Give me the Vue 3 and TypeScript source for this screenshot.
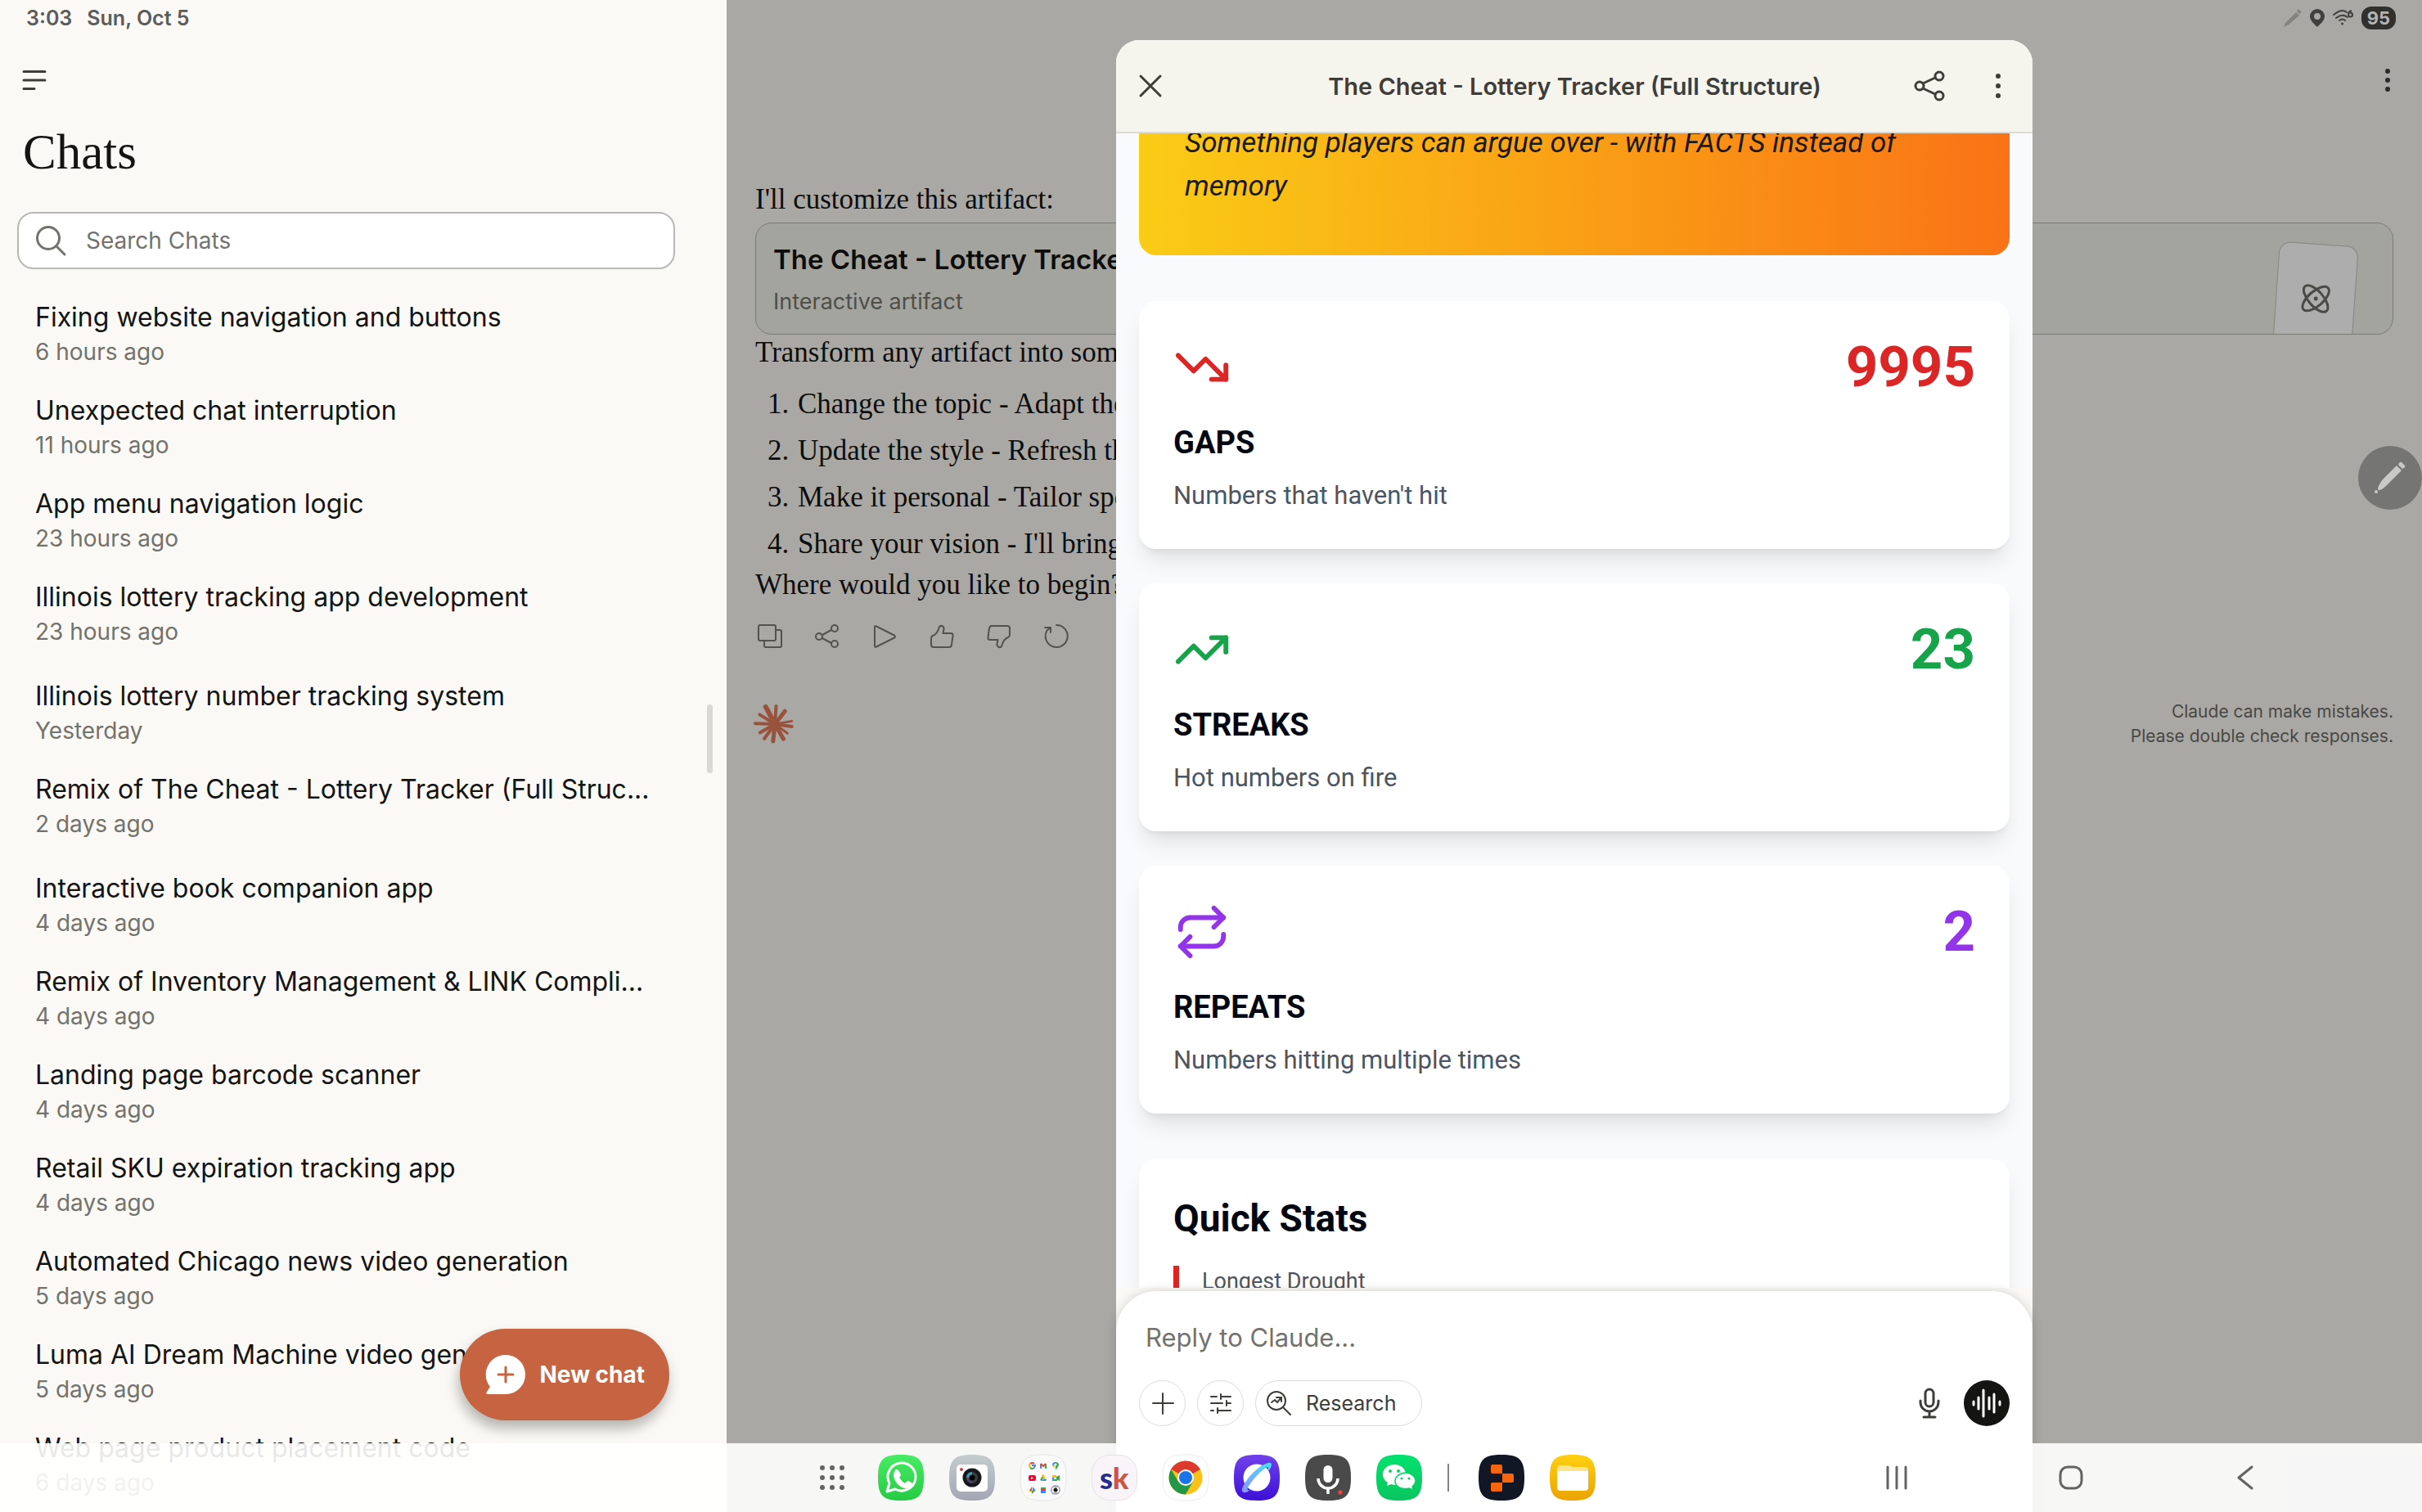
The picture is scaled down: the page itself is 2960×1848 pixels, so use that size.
<script setup lang="ts">
interface Chat {
  title: string
  when: string
}

interface Metric {
  label: string
  text: string
  value: string
  tone: string
  paths: string[]
}

interface Action {
  label: string
  paths: string[]
}

const groups: Chat[][] = [
  [
    { title: 'Fixing website navigation and buttons', when: '6 hours ago' },
    { title: 'Unexpected chat interruption', when: '11 hours ago' },
    { title: 'App menu navigation logic', when: '23 hours ago' },
    { title: 'Illinois lottery tracking app development', when: '23 hours ago' },
  ],
  [
    { title: 'Illinois lottery number tracking system', when: 'Yesterday' },
    { title: 'Remix of The Cheat - Lottery Tracker (Full Struc...', when: '2 days ago' },
  ],
  [
    { title: 'Interactive book companion app', when: '4 days ago' },
    { title: 'Remix of Inventory Management & LINK Compli...', when: '4 days ago' },
    { title: 'Landing page barcode scanner', when: '4 days ago' },
    { title: 'Retail SKU expiration tracking app', when: '4 days ago' },
    { title: 'Automated Chicago news video generation', when: '5 days ago' },
    { title: 'Luma AI Dream Machine video generation', when: '5 days ago' },
    { title: 'Web page product placement code', when: '6 days ago' },
  ],
]

const ideas: string[] = [
  'Change the topic - Adapt the text',
  'Update the style - Refresh the look',
  'Make it personal - Tailor specifics',
  "Share your vision - I'll bring it",
]

const actions: Action[] = [
  { label: 'Copy', paths: ['M4 1h16q2 0 2 2v15q0 2-2 2H3q-2 0-2-2V3q0-2 2-2z', 'M22 7h5q2 0 2 2v17q0 2-2 2H10q-2 0-2-2v-6'] },
  {
    label: 'Share',
    paths: [
      'M24 1a4 4 0 1 0 0 8a4 4 0 1 0 0-8z',
      'M24 20a4 4 0 1 0 0 8a4 4 0 1 0 0-8z',
      'M5 11a4 4 0 1 0 0 8a4 4 0 1 0 0-8z',
      'M9 13l11-6M9 17l11 6',
    ],
  },
  { label: 'Read aloud', paths: ['M3 3.500v23q0 2 2 1l22-11q2-1.500 0-3L5 2.500q-2-1 -2 1z'] },
  { label: 'Good response', paths: ['M2 17q0-2 2-3q5-2 7-8l1-3q1-1.500 3-1q3 1 2.500 4l-1 5H26q3 0 2.500 3l-1.500 11q-.5 3-3 3H5q-3 0-3-3z'] },
  { label: 'Bad response', paths: ['M28 13q0 2-2 3q-5 2-7 8l-1 3q-1 1.500-3 1q-3-1-2.500-4l1-5H4q-3 0-2.500-3L3 5q.5-3 3-3H25q3 0 3 3z'] },
  { label: 'Retry', paths: ['M1 4h7v6', 'M8 4L4 7A13.500 13.500 0 1 0 15 1'] },
]

const metrics: Metric[] = [
  {
    label: 'GAPS',
    text: "Numbers that haven't hit",
    value: '9995',
    tone: 'red',
    paths: ['M22 17l-8.500-8.500-5 5L2 7', 'M16 17h6v-6'],
  },
  {
    label: 'STREAKS',
    text: 'Hot numbers on fire',
    value: '23',
    tone: 'green',
    paths: ['M22 7l-8.500 8.500-5-5L2 17', 'M16 7h6v6'],
  },
  {
    label: 'REPEATS',
    text: 'Numbers hitting multiple times',
    value: '2',
    tone: 'purple',
    paths: ['M17 2l4 4-4 4', 'M3 11v-1a4 4 0 0 1 4-4h14', 'M7 22l-4-4 4-4', 'M21 13v1a4 4 0 0 1-4 4H3'],
  },
]

const rays: { angle: number; length: number; width: number }[] = [
  { angle: 4, length: 23, width: 4 },
  { angle: 38, length: 21, width: 5 },
  { angle: 62, length: 0, width: 0 },
  { angle: 80, length: 22, width: 3 },
  { angle: 98, length: 22, width: 4 },
  { angle: 126, length: 20, width: 3 },
  { angle: 150, length: 22, width: 5 },
  { angle: 186, length: 22, width: 5 },
  { angle: 216, length: 23, width: 4 },
  { angle: 240, length: 22, width: 4 },
  { angle: 272, length: 25, width: 4 },
  { angle: 302, length: 23, width: 4 },
  { angle: 332, length: 25, width: 6 },
].filter((r) => r.length > 0)

const dots: number[][] = [0, 1, 2].flatMap((r) => [0, 1, 2].map((c) => [19 + c * 12, 16 + r * 12]))
const squircle = 'M28 0C50 0 56 6 56 28S50 56 28 56 0 50 0 28 6 0 28 0Z'
</script>

<template>
  <div class="app">
    <aside class="sidebar">
      <div class="clock"><span>3:03</span><span>Sun, Oct 5</span></div>
      <button class="menu" type="button" aria-label="Menu">
        <svg width="28" height="28" viewBox="0 0 28 28"><path d="M1 3.500h26M1 14h26M1 24.500h13" /></svg>
      </button>
      <h1>Chats</h1>
      <label class="search">
        <svg width="38" height="38" viewBox="0 0 38 38"><circle cx="16" cy="16" r="13.500" /><path d="M26 26l10 10" /></svg>
        <input type="text" placeholder="Search Chats" aria-label="Search Chats" />
      </label>
      <nav class="history">
        <ul v-for="(group, g) in groups" :key="g">
          <li v-for="chat in group" :key="chat.title">
            <a href="#"><span class="title">{{ chat.title }}</span><span class="when">{{ chat.when }}</span></a>
          </li>
        </ul>
      </nav>
      <span class="thumb"></span>
      <button class="new-chat" type="button">
        <svg width="48" height="48" viewBox="0 0 48 48">
          <path d="M24 0a24 24 0 1 1 0 48H3q-4 0-2-3l4-6A24 24 0 0 1 24 0z" fill="#fff" />
          <path d="M24 15v18M15 24h18" stroke="#c66441" stroke-width="3" stroke-linecap="round" />
        </svg>
        New chat
      </button>
    </aside>

    <main class="main">
      <div class="system">
        <svg width="22" height="22" viewBox="0 0 22 22"><path d="M0 22l2-5L15 4l4 4L6 19zM16 3l2-3 4 4-3 2z" fill="#84837f" /></svg>
        <svg width="18" height="22" viewBox="0 0 18 22"><path d="M9 0a9 9 0 0 1 9 9c0 5-5 9-9 13C5 18 0 14 0 9a9 9 0 0 1 9-9zm0 5a4 4 0 1 0 0 8 4 4 0 0 0 0-8z" fill="#3f3f3d" /></svg>
        <svg width="25" height="22" viewBox="0 0 25 22">
          <path d="M1 7q10-8 16-3M4 11q7-6 14-1M8 14q4-3 7 0" fill="none" stroke="#3f3f3d" stroke-width="2" stroke-linecap="round" />
          <circle cx="11.500" cy="18" r="1.500" fill="#3f3f3d" />
          <path d="M23 2q-4 1-4 5a2.500 2.500 0 1 0 2.500-2.500q-2 0-2.500 2" fill="none" stroke="#3f3f3d" stroke-width="2" />
        </svg>
        <span class="battery">95</span>
      </div>
      <button class="kebab" type="button" aria-label="More options">
        <svg width="30" height="30" viewBox="0 0 30 30"><circle cx="15" cy="4" r="3" /><circle cx="15" cy="15" r="3" /><circle cx="15" cy="26" r="3" /></svg>
      </button>

      <article class="reply">
        <p>I'll customize this artifact:</p>
        <a class="artifact" href="#">
          <span class="artifact-name">The Cheat - Lottery Tracker (Full Structure)</span>
          <span class="artifact-kind">Interactive artifact</span>
          <span class="sheet">
            <svg width="36" height="36" viewBox="0 0 36 36">
              <ellipse cx="18" cy="18" rx="20" ry="9" transform="rotate(45 18 18)" />
              <ellipse cx="18" cy="18" rx="20" ry="9" transform="rotate(-45 18 18)" />
              <circle class="core" cx="18" cy="18" r="2.500" />
            </svg>
          </span>
        </a>
        <p>Transform any artifact into something uniquely yours!</p>
        <ol>
          <li v-for="(idea, i) in ideas" :key="idea"><span class="num">{{ i + 1 }}.</span>{{ idea }}</li>
        </ol>
        <p>Where would you like to begin?</p>
      </article>

      <div class="actions">
        <button v-for="action in actions" :key="action.label" type="button" :aria-label="action.label">
          <svg width="30" height="30" viewBox="0 0 30 30"><path v-for="d in action.paths" :key="d" :d="d" /></svg>
        </button>
      </div>

      <div class="footnote">
        <svg class="burst" width="48" height="48" viewBox="0 0 48 48">
          <line
            v-for="ray in rays"
            :key="ray.angle"
            x1="24"
            y1="24"
            x2="24"
            :y2="25 - ray.length"
            :stroke-width="ray.width"
            :transform="`rotate(${ray.angle} 24 24)`"
          />
        </svg>
        <p>Claude can make mistakes.<br />Please double check responses.</p>
      </div>

      <button class="pen" type="button" aria-label="Pen tools">
        <svg width="40" height="40" viewBox="0 0 40 40">
          <path d="M28 5l6 6L15 30q-5 5-9 5-2-1 0-5 2-5 6-9zM31 2q1-2 3-1l4 4q1 2-1 3l-2 1-5-5z" fill="#c9c9c8" />
          <circle cx="3" cy="37" r="2" fill="#c9c9c8" />
        </svg>
      </button>

      <section class="modal" role="dialog" aria-label="Artifact">
        <header>
          <button type="button" aria-label="Close">
            <svg width="28" height="28" viewBox="0 0 28 28"><path d="M2 2l24 24M26 2L2 26" /></svg>
          </button>
          <h2>The Cheat - Lottery Tracker (Full Structure)</h2>
          <div class="tools">
            <button type="button" aria-label="Share">
              <svg width="38" height="38" viewBox="0 0 38 38">
                <circle cx="31" cy="7" r="5" /><circle cx="31" cy="31" r="5" /><circle cx="7" cy="19" r="5" />
                <path d="M11 16l15-7M11 22l15 7" />
              </svg>
            </button>
            <button type="button" aria-label="More">
              <svg class="solid" width="30" height="30" viewBox="0 0 30 30"><circle cx="15" cy="3" r="3" /><circle cx="15" cy="15" r="3" /><circle cx="15" cy="27" r="3" /></svg>
            </button>
          </div>
        </header>

        <div class="preview">
          <div class="banner"><em>Something players can argue over - with FACTS instead of memory</em></div>
          <div class="cards">
            <div v-for="metric in metrics" :key="metric.label" class="card">
              <div class="card-top" :class="metric.tone">
                <svg width="70" height="70" viewBox="0 0 24 24"><path v-for="d in metric.paths" :key="d" :d="d" /></svg>
                <strong>{{ metric.value }}</strong>
              </div>
              <h3>{{ metric.label }}</h3>
              <p>{{ metric.text }}</p>
            </div>
          </div>
          <div class="card stats">
            <h2>Quick Stats</h2>
            <div class="stat">Longest Drought</div>
          </div>
        </div>

        <form class="composer" @submit.prevent>
          <input type="text" placeholder="Reply to Claude..." aria-label="Reply to Claude" />
          <div class="controls">
            <button class="round" type="button" aria-label="Add">
              <svg width="30" height="30" viewBox="0 0 30 30"><path d="M15 3v25M3 15h25" /></svg>
            </button>
            <button class="round" type="button" aria-label="Settings">
              <svg width="30" height="30" viewBox="0 0 30 30"><path d="M3 7h7M15 7h12M15 4v6M3 15h14M22 15h5M22 12v6M3 24h3M11 24h16M11 21v6" /></svg>
            </button>
            <button class="pill" type="button">
              <svg width="30" height="30" viewBox="0 0 30 30"><circle cx="12" cy="12" r="11" /><path d="M20 20l9 9M6 14l4-3 3 3 5-6M12 8h6v5" /></svg>
              Research
            </button>
            <button class="mic" type="button" aria-label="Dictate">
              <svg width="30" height="38" viewBox="0 0 30 38"><rect x="10" y="2" width="10" height="21" rx="5" /><path d="M4 16v2a11 11 0 0 0 22 0v-2M15 29v7M8 36h14" /></svg>
            </button>
            <button class="voice" type="button" aria-label="Voice mode">
              <svg width="36" height="36" viewBox="0 0 36 36"><path d="M2 16v4M8 11v14M14 2v32M21 11v14M27 7v22M34 16v4" /></svg>
            </button>
          </div>
        </form>
      </section>
    </main>

    <footer class="taskbar">
      <button type="button" aria-label="All apps">
        <svg width="56" height="56" viewBox="0 0 56 56"><circle v-for="d in dots" :key="d.join()" :cx="d[0]" :cy="d[1]" r="3" fill="#636361" /></svg>
      </button>
      <button type="button" aria-label="WhatsApp">
        <svg width="56" height="56" viewBox="0 0 56 56">
          <defs><linearGradient id="wa" x2="0" y2="1"><stop stop-color="#48ec64" /><stop offset="1" stop-color="#27cb43" /></linearGradient></defs>
          <path :d="squircle" fill="url(#wa)" />
          <path d="M11 45l3-10a17 17 0 1 1 7 7z" fill="none" stroke="#fff" stroke-width="3" stroke-linejoin="round" />
          <path transform="translate(16 15)" d="M5 4q2-2 4 0l3 5q0 2-2 4 3 5 7 7 2-3 4-3l4 2q2 2 0 4-3 5-9 3Q5 22 3 11q0-4 2-7z" fill="#fff" />
        </svg>
      </button>
      <button type="button" aria-label="Camera">
        <svg width="56" height="56" viewBox="0 0 56 56">
          <defs><linearGradient id="cam" x2="0" y2="1"><stop stop-color="#c5cdd0" /><stop offset="1" stop-color="#a3a5b4" /></linearGradient></defs>
          <path :d="squircle" fill="url(#cam)" />
          <rect x="9" y="12" width="38" height="33" rx="5" fill="#fff" />
          <circle cx="28" cy="28" r="11.500" fill="#18181a" /><circle cx="28" cy="28" r="7" fill="#3b3b40" />
          <path d="M28 21v7h-7a7 7 0 0 1 7-7z" fill="#3a9ab4" /><path d="M21 28h7v7a7 7 0 0 1-7-7z" fill="#4b4566" /><circle cx="28" cy="28" r="3.500" fill="#000" /><circle cx="15" cy="18" r="2" fill="#d83a36" />
        </svg>
      </button>
      <button type="button" aria-label="Google apps">
        <svg width="56" height="56" viewBox="0 0 56 56">
          <path :d="squircle" fill="#fafafa" stroke="#e4e4e6" />
          <g fill="none" stroke-width="2">
            <path d="M17 11a3.500 3.500 0 0 0-5 0" stroke="#ea4335" /><path d="M12 11q-2 2 0 5" stroke="#fbbc05" /><path d="M12 16q2 2 5 0" stroke="#34a853" /><path d="M17 16l1-3h-4" stroke="#4285f4" />
            <path d="M25 17v-6" stroke="#4285f4" /><path d="M25 11l3 3 3-3" stroke="#ea4335" /><path d="M31 11v6" stroke="#34a853" />
          </g>
          <path d="M43 9a3.500 3.500 0 0 1 4 4l-4 6z" fill="#34a853" /><path d="M43 9a3.500 3.500 0 0 0-4 4l4-1z" fill="#4285f4" /><path d="M39 13l2 3 2-3z" fill="#fbbc05" /><circle cx="43" cy="12" r="1.500" fill="#fff" />
          <rect x="10" y="25" width="9" height="7" rx="2" fill="#ff0033" /><path d="M13 27l3 1.500-3 1.500z" fill="#fff" />
          <path d="M28 24l-4 7 2 1 3-5z" fill="#34a853" /><path d="M28 24l4 7h-3l-3-6z" fill="#fbbc05" /><path d="M26 32l2-2h4l-1 2z" fill="#4285f4" />
          <path d="M39 25h5v3h-5z" fill="#fbbc05" /><path d="M39 28h2v4h-2z" fill="#4285f4" /><path d="M41 30h4v2h-4zM44 27l4-2v7l-4-2z" fill="#34a853" />
          <path d="M14 39v5h-3z" fill="#ea4335" /><path d="M15 39v5h4z" fill="#4285f4" /><path d="M10 44h4v2z" fill="#fbbc05" /><path d="M14 44h4l-4 4z" fill="#34a853" />
          <path d="M25 40h6v2h-6z" fill="#34a853" /><path d="M25 42h6v2h-6z" fill="#ea4335" /><path d="M25 44h6v3h-6z" fill="#4285f4" />
          <circle cx="43" cy="43" r="6" fill="#a9abb5" /><rect x="39" y="40" width="8" height="6" rx="1" fill="#fff" /><circle cx="43" cy="43" r="2.500" fill="#18181a" />
        </svg>
      </button>
      <button class="sk" type="button" aria-label="sk"><span>s</span><span class="k">k</span></button>
      <button type="button" aria-label="Chrome">
        <svg width="56" height="56" viewBox="0 0 56 56">
          <path :d="squircle" fill="#fff" stroke="#ececec" />
          <circle cx="28" cy="28" r="20.500" fill="#fbc116" />
          <path d="M28 28L10.250 17.750A20.500 20.500 0 0 1 45.750 17.750z" fill="#dc3a2c" />
          <path d="M28 17.750h17.750L28 28z" fill="#dc3a2c" />
          <path d="M10.250 17.750A20.500 20.500 0 0 0 28 48.500L36.900 33.100 28 28 19.100 33.100z" fill="#239746" />
          <circle cx="28" cy="28" r="10" fill="#fff" /><circle cx="28" cy="28" r="8" fill="#1a73e8" />
        </svg>
      </button>
      <button type="button" aria-label="Internet">
        <svg width="56" height="56" viewBox="0 0 56 56">
          <defs>
            <linearGradient id="net" x2="0" y2="1"><stop stop-color="#7142ea" /><stop offset="1" stop-color="#3c10d6" /></linearGradient>
            <linearGradient id="ring" x1="0" y1="1" x2="1" y2="0"><stop stop-color="#8c94ff" /><stop offset="1" stop-color="#46e2f4" /></linearGradient>
          </defs>
          <path :d="squircle" fill="url(#net)" />
          <circle cx="28" cy="28" r="16.500" fill="#fff" />
          <path d="M42 10c5-1 5 3 1 9l-2-1c2-3 1-4-2-2C31 21 22 32 17 40c-1 3 0 4 3 3l-3 2c-6 3-9 0-6-6C15 29 31 12 42 10z" fill="url(#ring)" />
        </svg>
      </button>
      <button type="button" aria-label="Voice Recorder">
        <svg width="56" height="56" viewBox="0 0 56 56">
          <path :d="squircle" fill="#4a4a4a" />
          <rect x="22.500" y="13" width="11" height="21" rx="5.500" fill="#fff" />
          <path d="M16 29a12 12 0 0 0 24 0M28 41v7" fill="none" stroke="#fff" stroke-width="3.500" /><circle cx="43" cy="46" r="2.750" fill="#e94335" />
        </svg>
      </button>
      <button type="button" aria-label="WeChat">
        <svg width="56" height="56" viewBox="0 0 56 56">
          <defs><linearGradient id="wc" x2="0" y2="1"><stop stop-color="#03e26e" /><stop offset="1" stop-color="#09c560" /></linearGradient></defs>
          <path :d="squircle" fill="url(#wc)" />
          <path d="M22 12c8 0 14 5 14 12s-6 13-14 13l-4-1-5 2 1-4C3 27 8 12 22 12z" fill="#fff" />
          <path d="M36 22c7 0 12 5 12 10 0 3-2 5-4 7l1 4-5-2c-9 2-17-2-17-9 0-5 6-10 13-10z" fill="#fff" stroke="#07d267" stroke-width="1.500" />
          <g fill="#07d267"><circle cx="17" cy="20" r="2" /><circle cx="27" cy="20" r="2" /><circle cx="31" cy="29" r="1.500" /><circle cx="40" cy="29" r="1.500" /></g>
        </svg>
      </button>
      <i class="divider"></i>
      <button type="button" aria-label="Replit">
        <svg width="56" height="56" viewBox="0 0 56 56"><path :d="squircle" fill="#111724" /><path d="M17 12h10q2 0 2 2v9h12q2 0 2 2v7q0 2-2 2H29v9q0 2-2 2H17q-2 0-2-2v-7q0-2 2-2h12V23H17q-2 0-2-2v-7q0-2 2-2z" fill="#f8650d" /></svg>
      </button>
      <button type="button" aria-label="My Files">
        <svg width="56" height="56" viewBox="0 0 56 56">
          <defs><linearGradient id="mf" x2="0" y2="1"><stop stop-color="#ffd011" /><stop offset="1" stop-color="#eba300" /></linearGradient></defs>
          <path :d="squircle" fill="url(#mf)" />
          <path d="M13 13h12l3 2h15q4 0 4 4v6H9v-8q0-4 4-4z" fill="#ffe48c" /><path d="M9 20h38v20q0 4-4 4H13q-4 0-4-4z" fill="#fff" />
        </svg>
      </button>
      <div class="keys">
        <button type="button" aria-label="Recents"><svg width="30" height="30" viewBox="0 0 30 30"><path d="M4 2v26M15 2v26M26 2v26" /></svg></button>
        <button type="button" aria-label="Home"><svg width="30" height="30" viewBox="0 0 30 30"><rect x="2" y="2" width="26" height="26" rx="9" /></svg></button>
        <button type="button" aria-label="Back"><svg width="30" height="30" viewBox="0 0 30 30"><path d="M23 2L7 15l16 13" /></svg></button>
      </div>
    </footer>
  </div>
</template>

<style>
body {
  margin: 0;
}
</style>

<style scoped>
* {
  box-sizing: border-box;
}
.app {
  position: relative;
  display: grid;
  grid-template-columns: 30% 1fr;
  height: 100vh;
  overflow: hidden;
  background: #a9a8a4;
  font-family: Inter, "Liberation Sans", sans-serif;
  color: #141413;
}
button {
  display: flex;
  align-items: center;
  justify-content: center;
  margin: 0;
  padding: 0;
  border: 0;
  background: none;
  font: inherit;
  color: inherit;
}
a {
  color: inherit;
  text-decoration: none;
}
h1,
h2,
h3,
p,
ul,
ol {
  margin: 0;
  padding: 0;
  list-style: none;
}
svg {
  display: block;
  flex: none;
  overflow: visible;
}
input {
  min-width: 0;
  padding: 0;
  border: 0;
  outline: 0;
  background: none;
  font: inherit;
}
input::placeholder {
  color: #73726c;
  opacity: 1;
}

/* Sidebar */
.sidebar {
  position: relative;
  display: flex;
  flex-direction: column;
  min-height: 0;
  overflow: hidden;
  background: #faf9f5;
}
.clock {
  display: flex;
  gap: 18px;
  padding: 0 32px;
  font: 600 25px/44px Inter, sans-serif;
  color: #5c5c5a;
}
.menu {
  align-self: flex-start;
  width: 84px;
  height: 108px;
}
.menu path {
  stroke: #3d3d3a;
  stroke-width: 3;
  stroke-linecap: round;
}
h1 {
  padding: 0 28px;
  font: 400 61px/68px "Liberation Serif", serif;
}
.search {
  display: flex;
  align-items: center;
  gap: 24px;
  height: 70px;
  margin: 39px 63px 23px 21px;
  padding: 0 20px;
  border: 2px solid #b8b8b6;
  border-radius: 20px;
  background: #fff;
  font-size: 28px;
}
.search svg {
  fill: none;
  stroke: #73726c;
  stroke-width: 3;
  stroke-linecap: round;
}
.search input {
  flex: 1;
}
.history {
  flex: 1;
  min-height: 0;
  overflow: hidden;
}
.history ul + ul {
  margin-top: 7px;
}
.history a {
  display: flex;
  flex-direction: column;
  padding: 15px 43px;
  line-height: 42px;
  white-space: nowrap;
}
.title {
  font-size: 32px;
}
.when {
  font-size: 28px;
  color: #73726c;
}
.thumb {
  position: absolute;
  top: 861px;
  right: 17px;
  width: 7px;
  height: 84px;
  border-radius: 4px;
  background: #d9d8d4;
}
.new-chat {
  position: absolute;
  right: 70px;
  bottom: 112px;
  gap: 18px;
  height: 112px;
  padding: 0 30px 0 32px;
  border-radius: 56px;
  background: #c66441;
  box-shadow: -2px 10px 16px rgba(0, 0, 0, 0.28);
  font-size: 28px;
  font-weight: 700;
  color: #fff;
}

/* Conversation, dimmed behind the artifact */
.main {
  position: relative;
  display: flex;
  flex-direction: column;
  min-width: 0;
  padding: 0 35px;
  color: #0d0d0c;
}
.system {
  display: flex;
  align-items: center;
  justify-content: flex-end;
  gap: 10px;
  height: 44px;
  margin-right: -3px;
}
.battery {
  width: 42px;
  border-radius: 12px;
  background: #30302f;
  font: 700 22px/28px Inter, sans-serif;
  text-align: center;
  color: #b5b4b0;
}
.kebab {
  align-self: flex-end;
  width: 56px;
  height: 108px;
  margin-right: -21px;
}
.kebab circle {
  fill: #2a2a28;
}
.reply {
  margin-top: 66px;
  font: 35px/52px "Liberation Serif", serif;
}
.artifact {
  position: relative;
  display: flex;
  flex-direction: column;
  height: 137px;
  margin: 2px 0 -4px;
  padding: 21px;
  overflow: hidden;
  border: 1px solid #7a7b76;
  border-radius: 20px;
  background: #a3a49d;
  font-family: Inter, sans-serif;
}
.artifact-name {
  font-size: 33px;
  font-weight: 600;
  line-height: 46px;
}
.artifact-kind {
  padding-top: 8px;
  font-size: 27px;
  line-height: 42px;
  color: #4e4e4a;
}
.sheet {
  position: absolute;
  top: 25px;
  right: 46px;
  display: flex;
  justify-content: center;
  width: 97px;
  height: 140px;
  padding-top: 48px;
  border: 1px solid #858583;
  border-radius: 14px;
  background: #adadad;
  transform: rotate(4deg);
}
.sheet ellipse {
  fill: none;
  stroke: #4a4a47;
  stroke-width: 3;
}
.core {
  fill: #4a4a47;
}
ol {
  padding: 8px 0 0 15px;
}
ol li {
  display: flex;
  gap: 11px;
  line-height: 57px;
}
.num {
  width: 26px;
}
.reply ol + p {
  margin-top: -4px;
}
.actions {
  display: flex;
  gap: 40px;
  margin-top: 22px;
  padding-left: 3px;
}
.actions svg {
  fill: none;
  stroke: #52524e;
  stroke-width: 2;
  stroke-linejoin: round;
  stroke-linecap: round;
}
.actions button {
  height: 30px;
}
.footnote {
  display: flex;
  align-items: center;
  justify-content: space-between;
  margin-top: 62px;
  font-size: 21px;
  line-height: 30px;
  text-align: right;
  color: #484845;
}
.burst line {
  stroke: #99533d;
  stroke-linecap: round;
}
.pen {
  position: absolute;
  top: 545px;
  right: 0;
  width: 78px;
  height: 78px;
  border-radius: 50%;
  background: #757574;
}

/* Artifact window */
.modal {
  position: absolute;
  inset: 49px 0 0;
  display: flex;
  flex-direction: column;
  width: 1120px;
  max-width: 100%;
  margin: 0 auto;
  border-radius: 28px 28px 0 0;
  background: #faf9f5;
}
header {
  display: grid;
  grid-template-columns: 1fr auto 1fr;
  align-items: center;
  height: 114px;
  padding: 0 27px 0 28px;
  border-bottom: 2px solid #dcdad2;
  border-radius: 28px 28px 0 0;
  background: #f5f4ed;
}
header button {
  justify-self: start;
}
header svg,
.controls svg {
  fill: none;
  stroke: #3d3d3a;
  stroke-width: 3;
  stroke-linecap: round;
}
.controls svg {
  stroke-width: 2;
}
header .solid {
  fill: #3d3d3a;
  stroke: none;
}
header h2 {
  font-size: 29px;
  font-weight: 600;
  color: #3d3d3a;
}
.tools {
  display: flex;
  justify-content: flex-end;
  gap: 50px;
}
.preview {
  flex: 1;
  min-height: 0;
  padding: 0 28px;
  overflow: hidden;
  background: #f9fafc;
  font-family: Roboto, sans-serif;
  color: #030712;
}
.banner {
  margin: -73px 0 56px;
  padding: 58px 56px;
  border-radius: 21px;
  background: linear-gradient(90deg, #facc15, #f97316);
  font-size: 35px;
  line-height: 53px;
  color: #1c1917;
}
.cards {
  display: flex;
  flex-direction: column;
  gap: 42px;
}
.card {
  padding: 42px;
  border-radius: 21px;
  background: #fff;
  box-shadow: 0 18px 26px -5px rgba(0, 0, 0, 0.1), 0 7px 10px -7px rgba(0, 0, 0, 0.1);
}
.card-top {
  display: flex;
  align-items: center;
  justify-content: space-between;
  height: 78px;
  margin-bottom: 27px;
}
.card-top svg {
  fill: none;
  stroke: currentColor;
  stroke-width: 2;
  stroke-linecap: round;
  stroke-linejoin: round;
}
.card-top strong {
  font-size: 69px;
  line-height: 78px;
}
.red {
  color: #dc2626;
}
.green {
  color: #16a34a;
}
.purple {
  color: #9333ea;
}
h3 {
  margin-bottom: 16px;
  font-size: 38px;
  line-height: 52px;
}
.card p {
  font-size: 31px;
  line-height: 46px;
  color: #4b5563;
}
.stats {
  margin-top: 56px;
}
.stats h2 {
  margin-bottom: 28px;
  font-size: 46px;
  line-height: 60px;
}
.stat {
  padding: 0 28px 60px;
  border-left: 7px solid #dc2626;
  font-size: 27px;
  line-height: 39px;
  color: #4b5563;
}
.composer {
  display: flex;
  flex-direction: column;
  height: 270px;
  margin-top: 4px;
  padding: 30px 28px;
  border-radius: 50px 50px 0 0;
  background: #fff;
  box-shadow: 0 0 14px rgba(0, 0, 0, 0.16);
}
.composer input {
  height: 52px;
  padding: 0 8px;
  font-size: 31px;
}
.controls {
  display: flex;
  gap: 14px;
  margin-top: 27px;
}
.round,
.pill {
  height: 56px;
  border: 1px solid #dddcd8;
  border-radius: 28px;
}
.round {
  width: 57px;
}
.pill {
  gap: 18px;
  padding: 0 31px 0 13px;
  font-size: 25px;
  color: #3d3d3a;
}
.mic {
  width: 56px;
  height: 56px;
  margin-left: auto;
}
.voice {
  width: 56px;
  height: 56px;
  border-radius: 50%;
  background: #141413;
}
.controls .mic svg,
.controls .voice svg {
  stroke-width: 3;
}
.controls .voice svg {
  stroke: #fff;
}

/* System task bar */
.taskbar {
  position: absolute;
  right: 0;
  bottom: 0;
  left: 0;
  display: flex;
  align-items: center;
  gap: 31px;
  height: 84px;
  padding-left: 33.3%;
  background: rgba(255, 255, 255, 0.9);
}
.sk {
  width: 56px;
  height: 56px;
  border: 1px solid #e6e2e6;
  border-radius: 22px;
  background: #f9f4f8;
  font: 900 36px/52px Lato, sans-serif;
  color: #2a2c8a;
}
.k {
  color: #cc5640;
}
.divider {
  width: 2px;
  height: 34px;
  margin-right: 5px;
  background: #838383;
}
.keys {
  display: flex;
  gap: 157px;
  margin-left: auto;
  padding-right: 188px;
}
.keys button {
  width: 56px;
}
.keys svg {
  fill: none;
  stroke: #636361;
  stroke-width: 3;
  stroke-linecap: round;
  stroke-linejoin: round;
}
</style>
